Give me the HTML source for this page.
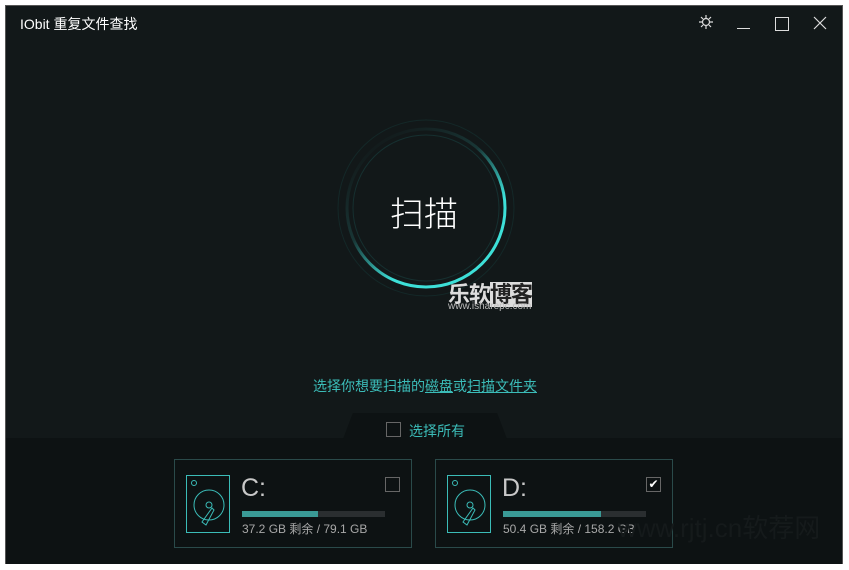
<!DOCTYPE html>
<html><head><meta charset="utf-8"><style>
body{margin:0;width:849px;height:570px;background:#fff;position:relative;overflow:hidden;font-family:"Liberation Sans","Noto Sans CJK SC",sans-serif}
.win{position:absolute;left:5px;top:5px;width:838px;height:559px;background:#121819;border:1px solid #555;box-sizing:border-box}
.abs{position:absolute}
.t{color:#fff;font-size:14px;left:14px;top:8px}
.bottom{left:0;top:432px;width:836px;height:126px;background:#0d1213}
.tab{left:337px;top:407px;width:164px;height:26px;background:#0d1213;clip-path:polygon(6% 0,94% 0,100% 100%,0 100%)}
.card{top:453px;width:238px;height:89px;border:1px solid #2a4a4a;box-sizing:border-box}
.hd{left:11px;top:15px;width:44px;height:58px;border:1px solid #3bbcb8;box-sizing:border-box}
.bar{left:67px;top:51px;width:143px;height:6px;background:#2a2e30}
.bar i{display:block;height:6px;background:#3a9a96}
.cb{width:15px;height:15px;border:1px solid #666;box-sizing:border-box}
.lbl{left:66px;top:14px;font-size:25px;color:#c8c8c8}
.sz{left:67px;top:60px;font-size:12px;color:#a8a8a8}
</style></head><body>
<div class="win">
<div class="abs t">IObit 重复文件查找</div>
<svg class="abs" style="left:692px;top:8px" width="16" height="16" fill="none" stroke="#ddd" stroke-width="1.2"><circle cx="8" cy="8" r="3.5"/><path d="M8 1v3M8 12v3M1 8h3M12 8h3M3 3l2 2M11 11l2 2M13 3l-2 2M5 11l-2 2"/></svg>
<div class="abs" style="left:731px;top:22px;width:13px;height:1px;background:#ddd"></div>
<div class="abs" style="left:769px;top:11px;width:12px;height:12px;border:1px solid #ddd"></div>
<svg class="abs" style="left:807px;top:10px" width="14" height="14" stroke="#ddd" stroke-width="1.2"><path d="M1 1L13 13M13 1L1 13"/></svg>
<svg class="abs" style="left:320px;top:102px" width="200" height="200">
<defs><linearGradient id="g" x1="0.1" y1="0.1" x2="0.7" y2="0.9"><stop offset="0" stop-color="#3de0d8" stop-opacity="0"/><stop offset=".45" stop-color="#3de0d8" stop-opacity=".15"/><stop offset=".8" stop-color="#3de0d8"/><stop offset="1" stop-color="#3de0d8"/></linearGradient></defs>
<circle cx="100" cy="100" r="88" fill="none" stroke="#142828" stroke-width="1"/>
<circle cx="100" cy="100" r="79" fill="none" stroke="url(#g)" stroke-width="3"/>
<circle cx="100" cy="100" r="73" fill="none" stroke="#163030" stroke-width="1"/>
</svg>
<div class="abs" style="left:384px;top:181px;color:#fff;font-size:34px;font-weight:300">扫描</div>
<div class="abs" style="left:442px;top:271px;color:#ddd;font-size:22px;font-weight:bold;letter-spacing:-1px">乐软<span style="background:#ddd;color:#222">博客</span></div>
<div class="abs" style="left:442px;top:295px;color:#bbb;font-size:10px">www.isharepc.com</div>
<div class="abs" style="left:307px;top:370px;color:#3bbcb8;font-size:14px">选择你想要扫描的<u>磁盘</u>或<u>扫描文件夹</u></div>
<div class="abs bottom"></div>
<div class="abs tab"></div>
<div class="abs cb" style="left:380px;top:416px"></div>
<div class="abs" style="left:403px;top:415px;color:#3bbcb8;font-size:14px">选择所有</div>
<div class="abs card" style="left:168px">
<div class="abs hd"><svg width="42" height="56"><circle cx="7" cy="7" r="2.5" fill="none" stroke="#3bbcb8"/><circle cx="22" cy="29" r="15" fill="none" stroke="#3bbcb8"/><circle cx="22" cy="29" r="3" fill="none" stroke="#3bbcb8"/><path d="M25 32 L27 34 L19 49 L15 46 Z" fill="none" stroke="#3bbcb8"/></svg></div>
<div class="abs lbl">C:</div><div class="abs cb" style="left:210px;top:17px"></div>
<div class="abs bar"><i style="width:76px"></i></div>
<div class="abs sz">37.2 GB 剩余 / 79.1 GB</div></div>
<div class="abs card" style="left:429px">
<div class="abs hd"><svg width="42" height="56"><circle cx="7" cy="7" r="2.5" fill="none" stroke="#3bbcb8"/><circle cx="22" cy="29" r="15" fill="none" stroke="#3bbcb8"/><circle cx="22" cy="29" r="3" fill="none" stroke="#3bbcb8"/><path d="M25 32 L27 34 L19 49 L15 46 Z" fill="none" stroke="#3bbcb8"/></svg></div>
<div class="abs lbl">D:</div><div class="abs cb" style="left:210px;top:17px;color:#fff;font-size:12px;line-height:13px;text-align:center">✔</div>
<div class="abs bar"><i style="width:98px"></i></div>
<div class="abs sz">50.4 GB 剩余 / 158.2 GB</div></div>
<div class="abs" style="left:612px;top:502px;color:#151a1b;font-size:26px">www.rjtj.cn软荐网</div>
</div>
</body></html>
